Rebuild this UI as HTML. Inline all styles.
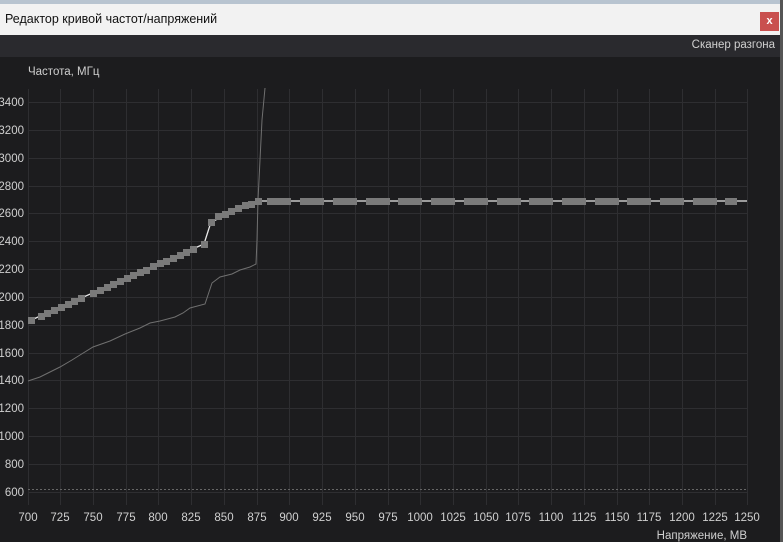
<!DOCTYPE html>
<html><head><meta charset="utf-8"><style>
html,body{margin:0;padding:0;width:783px;height:542px;overflow:hidden;background:#3a3a3e;font-family:"Liberation Sans",sans-serif}
#win{position:absolute;left:0;top:0;width:780px;height:542px;background:#1c1c1e}
#title{position:absolute;left:0;top:0;width:780px;height:35px;background:#f2f2f2;border-top:4px solid #b8c4d0;box-sizing:border-box}
#title span{position:absolute;left:5px;top:8px;font-size:12.5px;color:#111}
#close{position:absolute;left:760px;top:12px;width:19px;height:19px;background:#c9504f;color:#fff;font-size:11px;font-weight:bold;text-align:center;line-height:18px}
#tb{position:absolute;left:0;top:35px;width:780px;height:22px;background:#2a2a2e}
#tb span{position:absolute;right:5px;top:4px;font-size:11.5px;color:#d0d0d0}
#strip{position:absolute;left:780px;top:0;width:3px;height:542px;background:#555}
svg{position:absolute;left:0;top:0}
</style></head><body>
<div id="win">
<div id="title"><span>Редактор кривой частот/напряжений</span></div>
<div id="close">x</div>
<div id="tb"><span>Сканер разгона</span></div>
<svg width="780" height="542" font-family="Liberation Sans, sans-serif">
<text x="28" y="75" fill="#cfcfcf" font-size="11.5">Частота, МГц</text>
<g stroke="#2e2e31" stroke-width="1">
<line x1="28.5" y1="89" x2="28.5" y2="505"/><line x1="60.5" y1="89" x2="60.5" y2="505"/><line x1="93.5" y1="89" x2="93.5" y2="505"/><line x1="126.5" y1="89" x2="126.5" y2="505"/><line x1="158.5" y1="89" x2="158.5" y2="505"/><line x1="191.5" y1="89" x2="191.5" y2="505"/><line x1="224.5" y1="89" x2="224.5" y2="505"/><line x1="257.5" y1="89" x2="257.5" y2="505"/><line x1="289.5" y1="89" x2="289.5" y2="505"/><line x1="322.5" y1="89" x2="322.5" y2="505"/><line x1="355.5" y1="89" x2="355.5" y2="505"/><line x1="388.5" y1="89" x2="388.5" y2="505"/><line x1="420.5" y1="89" x2="420.5" y2="505"/><line x1="453.5" y1="89" x2="453.5" y2="505"/><line x1="486.5" y1="89" x2="486.5" y2="505"/><line x1="518.5" y1="89" x2="518.5" y2="505"/><line x1="551.5" y1="89" x2="551.5" y2="505"/><line x1="584.5" y1="89" x2="584.5" y2="505"/><line x1="617.5" y1="89" x2="617.5" y2="505"/><line x1="649.5" y1="89" x2="649.5" y2="505"/><line x1="682.5" y1="89" x2="682.5" y2="505"/><line x1="715.5" y1="89" x2="715.5" y2="505"/><line x1="747.5" y1="89" x2="747.5" y2="505"/>
<line x1="28" y1="102.5" x2="747" y2="102.5"/><line x1="28" y1="130.5" x2="747" y2="130.5"/><line x1="28" y1="158.5" x2="747" y2="158.5"/><line x1="28" y1="186.5" x2="747" y2="186.5"/><line x1="28" y1="213.5" x2="747" y2="213.5"/><line x1="28" y1="241.5" x2="747" y2="241.5"/><line x1="28" y1="269.5" x2="747" y2="269.5"/><line x1="28" y1="297.5" x2="747" y2="297.5"/><line x1="28" y1="325.5" x2="747" y2="325.5"/><line x1="28" y1="353.5" x2="747" y2="353.5"/><line x1="28" y1="380.5" x2="747" y2="380.5"/><line x1="28" y1="408.5" x2="747" y2="408.5"/><line x1="28" y1="436.5" x2="747" y2="436.5"/><line x1="28" y1="464.5" x2="747" y2="464.5"/><line x1="28" y1="492.5" x2="747" y2="492.5"/>
</g>
<line x1="28" y1="489.5" x2="747" y2="489.5" stroke="#666" stroke-dasharray="2,2"/>
<g fill="#d0d0d0" font-size="11.5" text-anchor="end">
<text x="24" y="106">3400</text><text x="24" y="134">3200</text><text x="24" y="162">3000</text><text x="24" y="190">2800</text><text x="24" y="217">2600</text><text x="24" y="245">2400</text><text x="24" y="273">2200</text><text x="24" y="301">2000</text><text x="24" y="329">1800</text><text x="24" y="357">1600</text><text x="24" y="384">1400</text><text x="24" y="412">1200</text><text x="24" y="440">1000</text><text x="24" y="468">800</text><text x="24" y="496">600</text>
</g>
<g fill="#d0d0d0" font-size="11.5" text-anchor="middle">
<text x="28" y="521">700</text><text x="60" y="521">725</text><text x="93" y="521">750</text><text x="126" y="521">775</text><text x="158" y="521">800</text><text x="191" y="521">825</text><text x="224" y="521">850</text><text x="257" y="521">875</text><text x="289" y="521">900</text><text x="322" y="521">925</text><text x="355" y="521">950</text><text x="388" y="521">975</text><text x="420" y="521">1000</text><text x="453" y="521">1025</text><text x="486" y="521">1050</text><text x="518" y="521">1075</text><text x="551" y="521">1100</text><text x="584" y="521">1125</text><text x="617" y="521">1150</text><text x="649" y="521">1175</text><text x="682" y="521">1200</text><text x="715" y="521">1225</text><text x="747" y="521">1250</text>
</g>
<text x="747" y="539" fill="#d0d0d0" font-size="11.5" text-anchor="end">Напряжение, МВ</text>
<polyline fill="none" stroke="#707070" stroke-width="1" points="28,381 40,377 50,372 60,367 72,360 80,355 93,347 110,341 125,334 140,328 150,323 160,321 175,317 183,313 190,308 205,304 208,295 212,283 220,277 232,274 240,270 250,267 256,264 257,240 258,200 260,160 262,120 265,88"/>
<polyline fill="none" stroke="#e8e8e8" stroke-width="1.3" points="29,321 204,244 211,222 258,201 747,201"/>
<g fill="#7a7a7a">
<rect x="28" y="317" width="7" height="7"/><rect x="38" y="313" width="7" height="7"/><rect x="44" y="310" width="7" height="7"/><rect x="51" y="307" width="7" height="7"/><rect x="58" y="304" width="7" height="7"/><rect x="65" y="301" width="7" height="7"/><rect x="71" y="298" width="7" height="7"/><rect x="78" y="295" width="7" height="7"/><rect x="90" y="290" width="7" height="7"/><rect x="97" y="287" width="7" height="7"/><rect x="104" y="284" width="7" height="7"/><rect x="110" y="281" width="7" height="7"/><rect x="117" y="278" width="7" height="7"/><rect x="124" y="275" width="7" height="7"/><rect x="130" y="272" width="7" height="7"/><rect x="137" y="269" width="7" height="7"/><rect x="143" y="267" width="7" height="7"/><rect x="150" y="263" width="7" height="7"/><rect x="157" y="260" width="7" height="7"/><rect x="163" y="258" width="7" height="7"/><rect x="170" y="255" width="7" height="7"/><rect x="177" y="252" width="7" height="7"/><rect x="183" y="249" width="7" height="7"/><rect x="190" y="246" width="7" height="7"/><rect x="201" y="241" width="7" height="7"/>
<rect x="208" y="219" width="7" height="7"/><rect x="215" y="213" width="7" height="7"/><rect x="222" y="211" width="7" height="7"/><rect x="228" y="208" width="7" height="7"/><rect x="235" y="205" width="7" height="7"/><rect x="242" y="202" width="7" height="7"/><rect x="248" y="201" width="7" height="7"/><rect x="255" y="198" width="7" height="7"/>
<rect x="267" y="198" width="24" height="7"/><rect x="300" y="198" width="24" height="7"/><rect x="333" y="198" width="24" height="7"/><rect x="366" y="198" width="24" height="7"/><rect x="398" y="198" width="24" height="7"/><rect x="431" y="198" width="24" height="7"/><rect x="464" y="198" width="24" height="7"/><rect x="497" y="198" width="24" height="7"/><rect x="529" y="198" width="24" height="7"/><rect x="562" y="198" width="24" height="7"/><rect x="595" y="198" width="24" height="7"/><rect x="627" y="198" width="24" height="7"/><rect x="660" y="198" width="24" height="7"/><rect x="693" y="198" width="24" height="7"/><rect x="725" y="198" width="12" height="7"/>
</g>
</svg>
</div>
<div id="strip"></div>
</body></html>
